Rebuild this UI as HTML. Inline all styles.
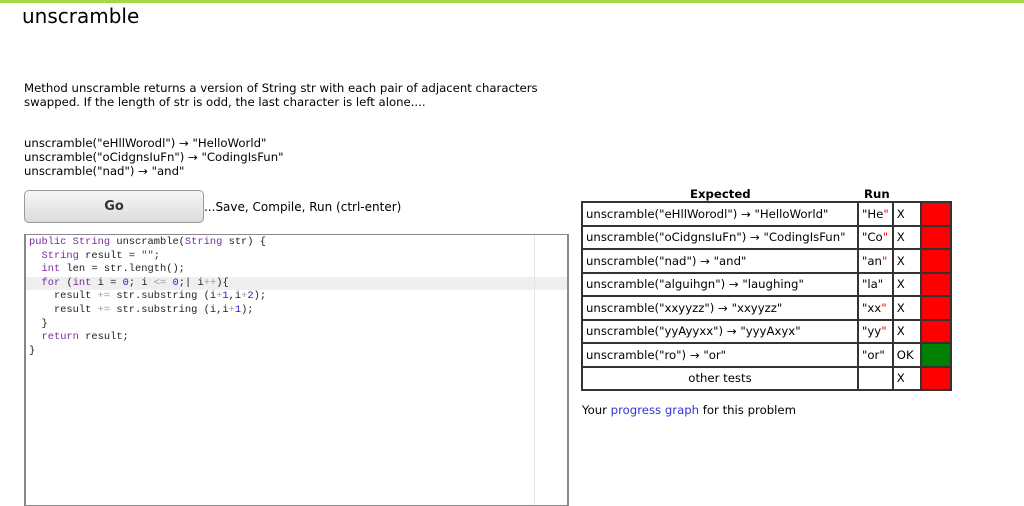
<!DOCTYPE html>
<html><head><meta charset="utf-8"><style>
body{margin:0;width:1024px;height:488px;overflow:hidden;background:#fff;font-family:"DejaVu Sans",Verdana,sans-serif;font-size:11.7px;color:#000;position:relative}
.bar{position:absolute;left:0;top:0;width:1024px;height:3px;background:#a6d84a}
.t{position:absolute;white-space:nowrap}
h1{position:absolute;left:22px;top:4px;margin:0;font-weight:normal;font-size:20px;font-family:"DejaVu Sans",sans-serif}
.go{position:absolute;left:24px;top:190px;width:178px;height:31px;border:1px solid #999;border-radius:5px;background:linear-gradient(#f6f6f6,#dcdcdc);text-align:center;line-height:31px;font-weight:bold;font-size:13px;color:#333}
.ed{position:absolute;left:24px;top:234px;width:541px;height:270px;border:1px solid #888;border-left-width:2px;border-right-width:2px}
.code{position:absolute;left:3px;top:1px;font-family:"Liberation Mono",monospace;font-size:10.4px;line-height:13.6px;white-space:pre;color:#222}
.k{color:#7a2ca0}.n{color:#2020d0}.s{color:#a22}.o{color:#999}
.hl{position:absolute;left:0;top:42px;width:541px;height:13px;background:#efefef}
.pm{position:absolute;left:508px;top:0;width:1px;height:270px;background:#e4e4e4}
table{position:absolute;left:581px;top:201px;border-collapse:collapse;border:2px solid #333}
td{border:2px solid #333;height:21.5px;padding:0 3px;white-space:nowrap}
td.r{background:#f00;width:28px;padding:0}td.g{background:#008000;width:28px;padding:0}
.q{color:#f00}
a{color:#3333dd;text-decoration:none}
</style></head><body>
<div class="bar"></div>
<h1>unscramble</h1>
<div class="t" style="left:24px;top:81px;line-height:14px">Method unscramble returns a version of String str with each pair of adjacent characters<br>swapped. If the length of str is odd, the last character is left alone....</div>
<div class="t" style="left:24px;top:136px;line-height:14px">unscramble("eHllWorodl") → "HelloWorld"<br>unscramble("oCidgnsIuFn") → "CodingIsFun"<br>unscramble("nad") → "and"</div>
<div class="go">Go</div>
<div class="t" style="left:204px;top:200px;font-size:12px">...Save, Compile, Run (ctrl-enter)</div>
<div class="ed"><div class="hl"></div><div class="pm"></div>
<div class="code"><span class="k">public</span> <span class="k">String</span> unscramble(<span class="k">String</span> str) {
  <span class="k">String</span> result = <span class="s">""</span>;
  <span class="k">int</span> len = str.length();
  <span class="k">for</span> (<span class="k">int</span> i = <span class="n">0</span>; i <span class="o">&lt;=</span> <span class="n">0</span>;| i<span class="o">++</span>){
    result <span class="o">+=</span> str.substring (i<span class="o">+</span><span class="n">1</span>,i<span class="o">+</span><span class="n">2</span>);
    result <span class="o">+=</span> str.substring (i,i<span class="o">+</span><span class="n">1</span>);
  }
  <span class="k">return</span> result;
}</div></div>
<div class="t" style="left:690px;top:187px;font-weight:bold">Expected</div>
<div class="t" style="left:864px;top:187px;font-weight:bold">Run</div>
<table>
<tr><td style="width:268px">unscramble("eHllWorodl") → "HelloWorld"</td><td>"He<span class="q">"</span></td><td style="width:20px">X</td><td class="r"></td></tr>
<tr><td>unscramble("oCidgnsIuFn") → "CodingIsFun"</td><td>"Co<span class="q">"</span></td><td>X</td><td class="r"></td></tr>
<tr><td>unscramble("nad") → "and"</td><td>"an<span class="q">"</span></td><td>X</td><td class="r"></td></tr>
<tr><td>unscramble("alguihgn") → "laughing"</td><td>"la"</td><td>X</td><td class="r"></td></tr>
<tr><td>unscramble("xxyyzz") → "xxyyzz"</td><td>"xx<span class="q">"</span></td><td>X</td><td class="r"></td></tr>
<tr><td>unscramble("yyAyyxx") → "yyyAxyx"</td><td>"yy<span class="q">"</span></td><td>X</td><td class="r"></td></tr>
<tr><td>unscramble("ro") → "or"</td><td>"or"</td><td>OK</td><td class="g"></td></tr>
<tr><td style="text-align:center">other tests</td><td></td><td>X</td><td class="r"></td></tr>
</table>
<div class="t" style="left:582px;top:403px">Your <a>progress graph</a> for this problem</div>
</body></html>
